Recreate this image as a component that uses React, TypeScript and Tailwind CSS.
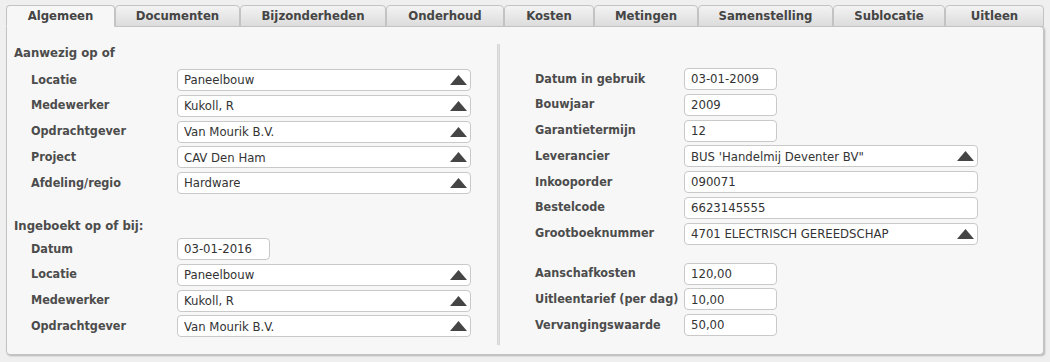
import React from "react";

const tabs: { label: string; w: string; active?: boolean }[] = [
  { label: "Algemeen", w: "w-[109px]", active: true },
  { label: "Documenten", w: "w-[125px]" },
  { label: "Bijzonderheden", w: "w-[146px]" },
  { label: "Onderhoud", w: "w-[118px]" },
  { label: "Kosten", w: "w-[90px]" },
  { label: "Metingen", w: "w-[104px]" },
  { label: "Samenstelling", w: "w-[135px]" },
  { label: "Sublocatie", w: "w-[112px]" },
  { label: "Uitleen", w: "w-[99px]" },
];

const font = "font-['Tahoma','DejaVu_Sans_Condensed','DejaVu_Sans',sans-serif]";

function Caret() {
  return (
    <svg width="17" height="10" viewBox="0 0 17 10" className="shrink-0">
      <path d="M8.5 0 L17 10 L0 10 Z" fill="#454545" />
    </svg>
  );
}

function Field({ value, select, small }: { value: string; select?: boolean; small?: boolean }) {
  return (
    <div
      className={`flex h-[22px] items-center justify-between rounded-[4px] border border-[#c9c9c9] bg-white pl-[6px] pr-[3px] text-[13px] text-[#333] ${small ? "w-[93px]" : "w-[294px]"}`}
    >
      <span className="truncate">{value}</span>
      {select && <Caret />}
    </div>
  );
}

function Row({
  label,
  value,
  select,
  small,
  labelW,
}: {
  label: string;
  value: string;
  select?: boolean;
  small?: boolean;
  labelW: string;
}) {
  return (
    <div className="flex items-center">
      <div className={`${labelW} shrink-0 whitespace-nowrap text-[12.5px] font-bold text-[#4c4c4c]`}>{label}</div>
      <Field value={value} select={select} small={small} />
    </div>
  );
}

export default function App() {
  return (
    <div className={`h-[362px] w-[1050px] bg-[#efefef] px-[6px] pt-[5px] ${font}`}>
      <div className="flex h-[22px]">
        {tabs.map((t) => (
          <div
            key={t.label}
            className={`flex ${t.w} shrink-0 items-center justify-center rounded-t-[4px] border border-[#c3c3c3] text-[13px] font-bold text-[#454545] ${
              t.active ? "border-b-transparent bg-[#f7f7f7]" : "bg-gradient-to-b from-[#f3f3f3] to-[#dcdcdc]"
            }`}
          >
            {t.label}
          </div>
        ))}
      </div>
      <div className="-mt-px flex h-[329px] rounded-b-[4px] rounded-tr-[4px] border border-[#c3c3c3] bg-[#f7f7f7] shadow-[1px_1px_2px_rgba(0,0,0,0.25)]">
        {/* left column */}
        <div className="w-[490px] shrink-0 pl-[7px] pt-[18px]">
          <div className="h-[16px] text-[13px] font-bold leading-[16px] text-[#4c4c4c]">Aanwezig op of</div>
          <div className="mt-[8px] flex flex-col gap-[3.75px] pl-[17px]">
            <Row labelW="w-[146px]" label="Locatie" value="Paneelbouw" select />
            <Row labelW="w-[146px]" label="Medewerker" value="Kukoll, R" select />
            <Row labelW="w-[146px]" label="Opdrachtgever" value="Van Mourik B.V." select />
            <Row labelW="w-[146px]" label="Project" value="CAV Den Ham" select />
            <Row labelW="w-[146px]" label="Afdeling/regio" value="Hardware" select />
          </div>
          <div className="mt-[24px] h-[16px] text-[13px] font-bold leading-[16px] text-[#4c4c4c]">
            Ingeboekt op of bij:
          </div>
          <div className="mt-[4px] flex flex-col gap-[3.75px] pl-[17px]">
            <Row labelW="w-[146px]" label="Datum" value="03-01-2016" small />
            <Row labelW="w-[146px]" label="Locatie" value="Paneelbouw" select />
            <Row labelW="w-[146px]" label="Medewerker" value="Kukoll, R" select />
            <Row labelW="w-[146px]" label="Opdrachtgever" value="Van Mourik B.V." select />
          </div>
        </div>

        {/* divider */}
        <div className="mt-[17px] mb-[9px] w-[3px] shrink-0 border-x border-[#d6d6d6] bg-[#e2e2e2]" />

        {/* right column */}
        <div className="flex flex-col pl-[35px] pt-[41px]">
          <div className="flex flex-col gap-[3.75px]">
            <Row labelW="w-[149px]" label="Datum in gebruik" value="03-01-2009" small />
            <Row labelW="w-[149px]" label="Bouwjaar" value="2009" small />
            <Row labelW="w-[149px]" label="Garantietermijn" value="12" small />
            <Row labelW="w-[149px]" label="Leverancier" value={"BUS 'Handelmij Deventer BV\""} select />
            <Row labelW="w-[149px]" label="Inkooporder" value="090071" />
            <Row labelW="w-[149px]" label="Bestelcode" value="6623145555" />
            <Row labelW="w-[149px]" label="Grootboeknummer" value="4701 ELECTRISCH GEREEDSCHAP" select />
          </div>
          <div className="mt-[18px] flex flex-col gap-[3.75px]">
            <Row labelW="w-[149px]" label="Aanschafkosten" value="120,00" small />
            <Row labelW="w-[149px]" label="Uitleentarief (per dag)" value="10,00" small />
            <Row labelW="w-[149px]" label="Vervangingswaarde" value="50,00" small />
          </div>
        </div>
      </div>
    </div>
  );
}
